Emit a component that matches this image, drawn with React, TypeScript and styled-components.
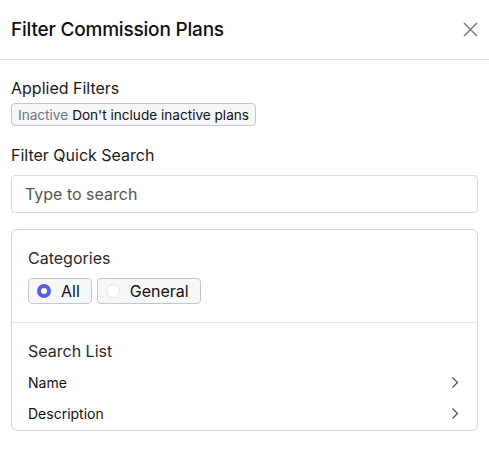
import React from "react";
import styled, { createGlobalStyle } from "styled-components";

const GlobalStyle = createGlobalStyle`
  html, body {
    margin: 0;
    padding: 0;
    background: #fff;
    font-family: Inter, "Liberation Sans", sans-serif;
    color: #111;
  }
`;

const Panel = styled.div`
  width: 489px;
  height: 471px;
  background: #fff;
  display: flex;
  flex-direction: column;
`;

const Header = styled.div`
  height: 60px;
  padding: 0 11px;
  display: flex;
  align-items: center;
  justify-content: space-between;
  border-bottom: 1px solid #e2e2e2;
  box-sizing: border-box;
`;

const Title = styled.h1`
  margin: 0;
  font-size: 19px;
  font-weight: 500;
  color: #111;
  letter-spacing: -0.2px;
`;

const CloseButton = styled.button`
  border: none;
  background: none;
  padding: 0;
  width: 15px;
  height: 16px;
  display: flex;
  align-items: center;
  justify-content: center;
  cursor: pointer;
`;

const Body = styled.div`
  padding: 18px 11px 0;
  display: flex;
  flex-direction: column;
`;

const Label = styled.div`
  font-size: 16px;
  color: #1a1a1a;
  line-height: 20px;
`;

const Chip = styled.div`
  margin-top: 5px;
  align-self: flex-start;
  display: flex;
  align-items: center;
  gap: 4px;
  height: 23px;
  padding: 0 6px;
  box-sizing: border-box;
  background: #f5f6f8;
  border: 1px solid #c3c7cd;
  border-radius: 4px;
  font-size: 13.6px;
  color: #111;
`;

const ChipKey = styled.span`
  color: #707780;
`;

const SectionLabel = styled(Label)`
  margin-top: 19px;
`;

const SearchInput = styled.input`
  margin-top: 10px;
  height: 38px;
  box-sizing: border-box;
  border: 1px solid #dcdcdc;
  border-radius: 4px;
  padding: 0 13px;
  font-family: inherit;
  font-size: 16px;
  color: #111;
  outline: none;

  &::placeholder {
    color: #555;
  }
`;

const Card = styled.div`
  margin-top: 16px;
  border: 1px solid #d4d4d4;
  border-radius: 6px;
  display: flex;
  flex-direction: column;
`;

const CardSection = styled.div<{ $divider?: boolean }>`
  padding: ${(p) => (p.$divider ? "18px 16px 18px" : "18px 16px 1px")};
  border-bottom: ${(p) => (p.$divider ? "1px solid #e2e2e2" : "none")};
`;

const CardLabel = styled.div`
  font-size: 16px;
  color: #2a2a2a;
  line-height: 20px;
`;

const RadioGroup = styled.div`
  margin-top: 10px;
  display: flex;
  gap: 5px;
`;

const RadioOption = styled.label`
  display: flex;
  align-items: center;
  gap: 10px;
  height: 26px;
  padding: 0 11px 0 8px;
  box-sizing: border-box;
  background: #f6f7f9;
  border: 1px solid #c3c7cd;
  border-radius: 4px;
  font-size: 16px;
  color: #111;
  cursor: pointer;
`;

const RadioDot = styled.span<{ $checked: boolean }>`
  width: 14px;
  height: 14px;
  border-radius: 50%;
  box-sizing: border-box;
  background: #fff;
  border: ${(p) => (p.$checked ? "4px solid #5b5ee0" : "1px solid #e3e3e3")};
`;

const ListRow = styled.div`
  display: flex;
  align-items: center;
  justify-content: space-between;
  height: 31px;
  font-size: 14px;
  color: #111;
  padding-right: 2px;
`;

const ListRows = styled.div`
  margin-top: 6px;
`;

const Chevron = () => (
  <svg width="8" height="13" viewBox="0 0 8 13" fill="none">
    <path d="M1.5 1.5L6.5 6.5L1.5 11.5" stroke="#4a4a4a" strokeWidth="1.2" />
  </svg>
);

const CloseIcon = () => (
  <svg width="15" height="15" viewBox="0 0 15 15" fill="none">
    <path d="M1 1L14 14M14 1L1 14" stroke="#808080" strokeWidth="1.6" />
  </svg>
);

const categories = ["All", "General"];
const searchFields = ["Name", "Description"];

const App = () => {
  const [selected, setSelected] = React.useState("All");

  return (
    <>
      <GlobalStyle />
      <Panel>
        <Header>
          <Title>Filter Commission Plans</Title>
          <CloseButton aria-label="Close">
            <CloseIcon />
          </CloseButton>
        </Header>
        <Body>
          <Label>Applied Filters</Label>
          <Chip>
            <ChipKey>Inactive</ChipKey>
            <span>Don't include inactive plans</span>
          </Chip>
          <SectionLabel>Filter Quick Search</SectionLabel>
          <SearchInput placeholder="Type to search" />
          <Card>
            <CardSection $divider>
              <CardLabel>Categories</CardLabel>
              <RadioGroup>
                {categories.map((c) => (
                  <RadioOption key={c} onClick={() => setSelected(c)}>
                    <RadioDot $checked={selected === c} />
                    {c}
                  </RadioOption>
                ))}
              </RadioGroup>
            </CardSection>
            <CardSection>
              <CardLabel>Search List</CardLabel>
              <ListRows>
                {searchFields.map((f) => (
                  <ListRow key={f}>
                    {f}
                    <Chevron />
                  </ListRow>
                ))}
              </ListRows>
            </CardSection>
          </Card>
        </Body>
      </Panel>
    </>
  );
};

export default App;
